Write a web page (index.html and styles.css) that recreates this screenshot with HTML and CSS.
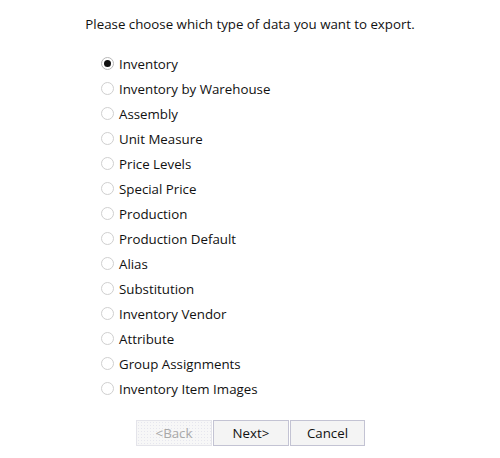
FILE: index.html
```html
<!DOCTYPE html>
<html>
<head>
<meta charset="utf-8">
<link rel="stylesheet" href="styles.css">
</head>
<body>
<div class="dialog">
  <p class="prompt">Please choose which type of data you want to export.</p>
  <div class="options">
    <label class="opt"><span class="radio checked"></span>Inventory</label>
    <label class="opt"><span class="radio"></span>Inventory by Warehouse</label>
    <label class="opt"><span class="radio"></span>Assembly</label>
    <label class="opt"><span class="radio"></span>Unit Measure</label>
    <label class="opt"><span class="radio"></span>Price Levels</label>
    <label class="opt"><span class="radio"></span>Special Price</label>
    <label class="opt"><span class="radio"></span>Production</label>
    <label class="opt"><span class="radio"></span>Production Default</label>
    <label class="opt"><span class="radio"></span>Alias</label>
    <label class="opt"><span class="radio"></span>Substitution</label>
    <label class="opt"><span class="radio"></span>Inventory Vendor</label>
    <label class="opt"><span class="radio"></span>Attribute</label>
    <label class="opt"><span class="radio"></span>Group Assignments</label>
    <label class="opt"><span class="radio"></span>Inventory Item Images</label>
  </div>
  <div class="buttons">
    <span class="btn disabled">&lt;Back</span>
    <span class="btn next">Next&gt;</span>
    <span class="btn cancel">Cancel</span>
  </div>
</div>
</body>
</html>
```
FILE: styles.css
```css
html, body {
  margin: 0;
  padding: 0;
  background: #ffffff;
}
body {
  font-family: "Open Sans", "Noto Sans", sans-serif;
  font-size: 13.3px;
  color: #111111;
}
.dialog {
  width: 500px;
  height: 458px;
  display: flex;
  flex-direction: column;
}
.prompt {
  margin: 14px 0 0 0;
  text-align: center;
  line-height: 20px;
}
.options {
  margin-top: 17px;
  padding-left: 101px;
  display: flex;
  flex-direction: column;
}
.opt {
  display: flex;
  align-items: center;
  height: 25px;
}
.radio {
  width: 11px;
  height: 11px;
  border: 1px solid #cfcfcf;
  border-radius: 50%;
  margin-right: 5px;
  box-sizing: content-box;
  display: flex;
  align-items: center;
  justify-content: center;
}
.radio.checked {
  border-color: #b8b8b8;
}
.radio.checked::after {
  content: "";
  width: 7px;
  height: 7px;
  border-radius: 50%;
  background: #111;
}
.buttons {
  margin-top: 19px;
  padding-left: 136px;
  display: flex;
  gap: 1px;
}
.btn {
  width: 76px;
  height: 26px;
  box-sizing: border-box;
  border: 1px solid #c3c3d3;
  background: #f4f4f4;
  display: flex;
  align-items: center;
  justify-content: center;
}
.btn.disabled {
  border-color: #e4e4ea;
  color: #a8a8a8;
  background-color: #f7f7f7;
  background-image: radial-gradient(#e6e6ee 0.6px, transparent 0.8px);
  background-size: 3px 3px;
}
.btn.cancel {
  width: 75px;
}
```
